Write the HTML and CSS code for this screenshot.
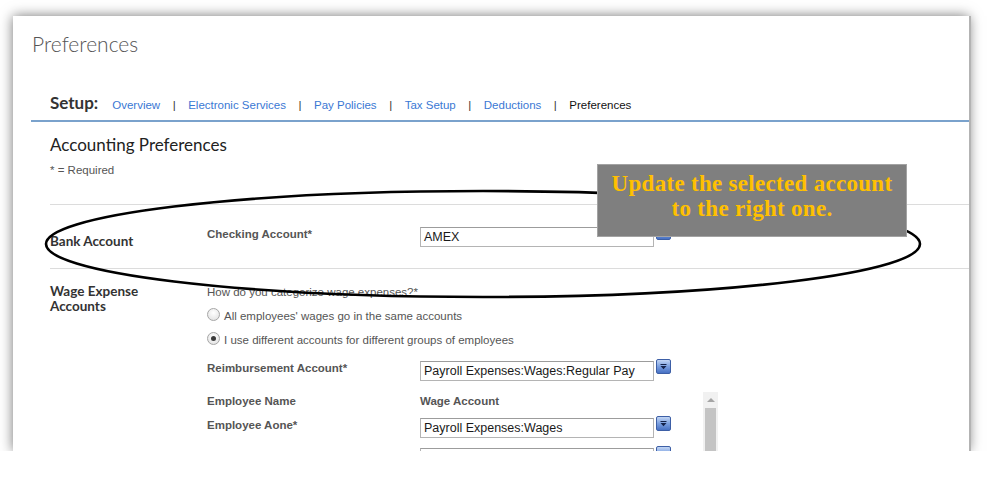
FILE: index.html
```html
<!DOCTYPE html>
<html lang="en">
<head>
    <meta charset="UTF-8">
    <title>Preferences</title>
    <link rel="stylesheet" href="styles.css">
</head>
<body>
    <div class="card">
        <h1 class="page-title">Preferences</h1>

        <div class="setup-nav">
            <span class="setup-label">Setup:</span>
            <a class="nav-link" href="#">Overview</a>
            <span class="sep">|</span>
            <a class="nav-link" href="#">Electronic Services</a>
            <span class="sep">|</span>
            <a class="nav-link" href="#">Pay Policies</a>
            <span class="sep">|</span>
            <a class="nav-link" href="#">Tax Setup</a>
            <span class="sep">|</span>
            <a class="nav-link" href="#">Deductions</a>
            <span class="sep">|</span>
            <span class="nav-current">Preferences</span>
        </div>

        <div class="prefs">
            <h2 class="prefs-title">Accounting Preferences</h2>
            <p class="required-note">* = Required</p>

            <div class="pref-row bank-row">
                <div class="section-name">Bank Account</div>
                <div class="section-body">
                    <div class="field">
                        <span class="field-label">Checking Account*</span>
                        <div class="combo">
                            <span class="combo-box">AMEX</span>
                            <span class="combo-btn"><svg width="13" height="13" viewBox="0 0 13 13"><path d="M3.5 4.5h6" stroke="#14224a" stroke-width="1"/><path d="M3.5 6h6l-3 3.2z" fill="#14224a"/></svg></span>
                        </div>
                    </div>
                </div>
            </div>

            <div class="pref-row wage-row">
                <div class="section-name wrap">Wage Expense Accounts</div>
                <div class="section-body">
                    <div class="question">How do you categorize wage expenses?*</div>
                    <div class="choice"><span class="radio"></span>All employees' wages go in the same accounts</div>
                    <div class="choice"><span class="radio checked"></span>I use different accounts for different groups of employees</div>

                    <div class="field gap-top">
                        <span class="field-label">Reimbursement Account*</span>
                        <div class="combo">
                            <span class="combo-box">Payroll Expenses:Wages:Regular Pay</span>
                            <span class="combo-btn"><svg width="13" height="13" viewBox="0 0 13 13"><path d="M3.5 4.5h6" stroke="#14224a" stroke-width="1"/><path d="M3.5 6h6l-3 3.2z" fill="#14224a"/></svg></span>
                        </div>
                    </div>

                    <div class="employee-list">
                        <div class="employee-rows">
                            <div class="list-head">
                                <span>Employee Name</span>
                                <span>Wage Account</span>
                            </div>
                            <div class="field">
                                <span class="field-label">Employee Aone*</span>
                                <div class="combo">
                                    <span class="combo-box">Payroll Expenses:Wages</span>
                                    <span class="combo-btn"><svg width="13" height="13" viewBox="0 0 13 13"><path d="M3.5 4.5h6" stroke="#14224a" stroke-width="1"/><path d="M3.5 6h6l-3 3.2z" fill="#14224a"/></svg></span>
                                </div>
                            </div>
                            <div class="field next">
                                <span class="field-label"></span>
                                <div class="combo">
                                    <span class="combo-box"></span>
                                    <span class="combo-btn"><svg width="13" height="13" viewBox="0 0 13 13"><path d="M3.5 4.5h6" stroke="#14224a" stroke-width="1"/><path d="M3.5 6h6l-3 3.2z" fill="#14224a"/></svg></span>
                                </div>
                            </div>
                        </div>
                        <div class="scrollbar">
                            <span class="scroll-up"></span>
                            <span class="scroll-thumb"></span>
                        </div>
                    </div>
                </div>
            </div>
        </div>

        <!-- hand-drawn highlight round the bank account row -->
        <svg class="mark" width="956" height="435" viewBox="0 0 956 435">
            <ellipse cx="470" cy="228" rx="437" ry="53" fill="none" stroke="#000" stroke-width="2.6"/>
        </svg>

        <div class="callout">Update the selected account<br>to the right one.</div>
    </div>
</body>
</html>
```

FILE: styles.css
```css
body {
    margin: 0;
    background-color: #fff;
    font-family: 'Liberation Sans', Arial, sans-serif;
}
.card {
    position: relative;
    width: 956px;
    height: 435px;
    margin: 16px 0 0 13px;
    padding-top: 15px;
    box-sizing: border-box;
    background-color: #fff;
    overflow: hidden;
    box-shadow: 2px 0 0 #b3b3b3, 0 0 12px rgba(0, 0, 0, 0.55);
}
.page-title {
    margin: 0 0 0 19px;
    font-family: Lato, 'Open Sans', sans-serif;
    font-weight: 300;
    font-size: 21px;
    line-height: 25px;
    color: #555;
}

/* setup navigation */
.setup-nav {
    display: flex;
    align-items: baseline;
    margin: 37px 0 0 18px;
    padding: 0 0 5px 19px;
    line-height: 20px;
    border-bottom: 2px solid #7aa2cc;
    font-size: 11.5px;
}
.setup-label {
    margin-right: 14px;
    font-family: Lato, 'Open Sans', sans-serif;
    font-weight: 700;
    font-size: 17px;
    color: #333;
}
.nav-link {
    color: #3a78d4;
    text-decoration: none;
}
.sep {
    margin: 0 12.5px;
    color: #333;
}
.nav-current {
    color: #111;
}

/* accounting preferences */
.prefs {
    margin-left: 37px;
}
.prefs-title {
    margin: 13px 0 0;
    font-family: Lato, 'Open Sans', sans-serif;
    font-weight: 400;
    font-size: 17px;
    line-height: 20px;
    color: #222;
}
.required-note {
    margin: 7px 0 0;
    font-size: 11.5px;
    line-height: 16px;
    color: #555;
}
.pref-row {
    display: grid;
    grid-template-columns: 157px 1fr;
    border-bottom: 1px solid #dcdcdc;
}
.bank-row {
    margin-top: 26px;
    padding: 21px 0 19px;
    border-top: 1px solid #dcdcdc;
}
.wage-row {
    padding-top: 15px;
    border-bottom: none;
}
.section-name {
    font-family: Lato, 'Open Sans', sans-serif;
    font-weight: 700;
    font-size: 13.5px;
    line-height: 15px;
    color: #333;
}
.bank-row .section-name {
    margin-top: 8px;
}
.section-name.wrap {
    max-width: 100px;
}
.question {
    font-size: 11.5px;
    line-height: 16px;
    color: #555;
}
.choice {
    display: flex;
    align-items: center;
    margin-top: 8px;
    font-size: 11.5px;
    line-height: 16px;
    color: #555;
}
.radio {
    width: 11px;
    height: 11px;
    margin: -3px 4px 0 0;
    border: 1px solid #a6a6a6;
    border-radius: 50%;
    background: radial-gradient(circle at 50% 35%, #fff, #dedede);
    box-sizing: content-box;
    position: relative;
}
.radio.checked::after {
    content: '';
    position: absolute;
    left: 3px;
    top: 3px;
    width: 5px;
    height: 5px;
    border-radius: 50%;
    background-color: #3b3b3b;
}

/* label + account combo */
.field {
    display: grid;
    grid-template-columns: 213px 1fr;
    align-items: start;
}
.field.gap-top {
    margin-top: 12px;
}
.field.next {
    margin-top: 9px;
}
.field-label,
.list-head span {
    min-height: 16px;
    font-size: 11.5px;
    font-weight: 700;
    line-height: 16px;
    color: #555;
}
.combo {
    display: flex;
    align-items: flex-start;
    margin-top: 1px;
}
.combo-box {
    width: 234px;
    height: 20px;
    padding-left: 3px;
    box-sizing: border-box;
    border: 1px solid #b4b4b4;
    border-top-color: #9c9c9c;
    font-size: 12.5px;
    line-height: 18px;
    color: #1a1a1a;
    background-color: #fff;
    white-space: nowrap;
    overflow: hidden;
}
.combo-btn {
    display: flex;
    width: 13px;
    height: 13px;
    margin: -2px 0 0 2px;
    border: 1px solid #3d5fa6;
    border-radius: 2px;
    background: linear-gradient(#c3d6f4, #7a9fe0 50%, #4771c4);
}

/* employee wage accounts with scroll track */
.employee-list {
    display: flex;
    margin-top: 11px;
    height: 80px;
}
.employee-rows {
    width: 496px;
}
.list-head {
    display: grid;
    grid-template-columns: 213px 1fr;
    padding-top: 1px;
    margin-bottom: 8px;
}
.scrollbar {
    display: flex;
    flex-direction: column;
    align-items: center;
    width: 15px;
    background-color: #f1f1f1;
}
.scroll-up {
    width: 0;
    height: 0;
    margin: 6px 0 6px;
    border-left: 4px solid transparent;
    border-right: 4px solid transparent;
    border-bottom: 4px solid #a5a5a5;
}
.scroll-thumb {
    width: 11px;
    flex: 1;
    background-color: #c4c4c4;
}

/* annotation on top of the form */
.mark {
    position: absolute;
    left: 0;
    top: 0;
    pointer-events: none;
}
.callout {
    position: absolute;
    left: 584px;
    top: 148px;
    width: 310px;
    height: 73px;
    box-sizing: border-box;
    padding-top: 6px;
    background-color: #7f7f7f;
    border: 1px solid #a3a3a3;
    font-family: 'Liberation Serif', 'Times New Roman', serif;
    font-weight: 700;
    font-size: 23px;
    line-height: 25px;
    letter-spacing: 0.3px;
    text-align: center;
    color: #ffc000;
}
```
